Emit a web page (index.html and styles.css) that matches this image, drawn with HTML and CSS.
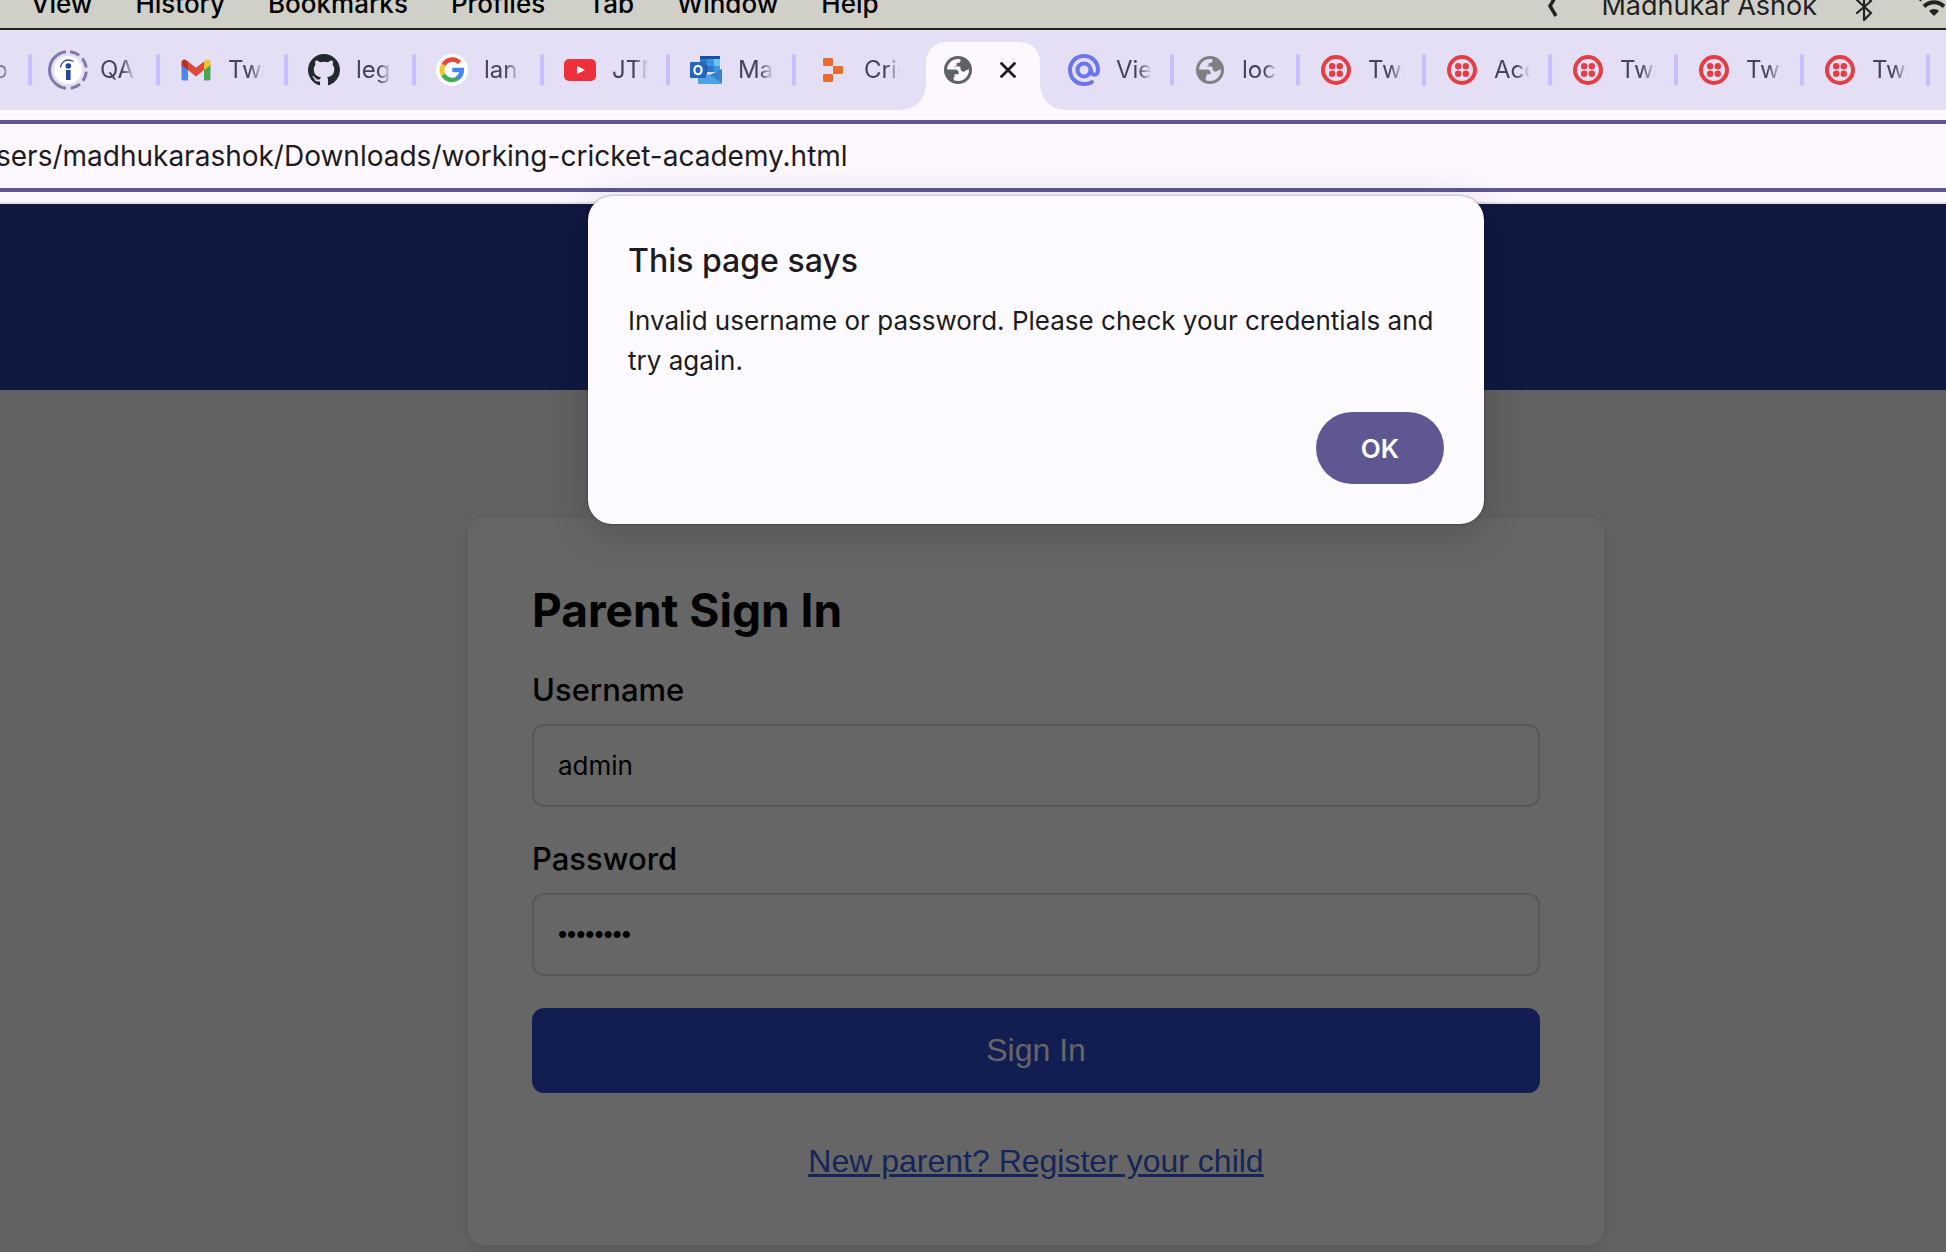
FILE: index.html
```html
<!DOCTYPE html>
<html lang="en">
<head>
<meta charset="utf-8">
<title>Parent Sign In</title>
<link rel="stylesheet" href="styles.css">
</head>
<body>
<svg class="defs" aria-hidden="true">
  <symbol id="globe" viewBox="0 0 32 32">
    <circle cx="16" cy="16" r="14"/>
    <circle class="sea" cx="16" cy="16" r="11"/>
    <path d="M18.500 4v2.500c0 2-1 2.500-3.700 2.500v1.500c0 1.500-.8 2-2.800 2v2.500h5.500c1 0 1.500.6 1.500 1.500 1 1 2 1.500 3.300 1 1.500-.5 2-2 5.200-2A12 12 0 0 0 18.500 4z"/>
    <path class="sea" d="M12 12.500h6.500v3H12z"/>
    <path d="M14.800 9.500h6v4h-2.300c0-1.500-1-2-3.700-2z"/>
    <path d="M4 15.500h9c2.500 0 3.700 1.200 3.700 4v.8h-4.200v2.700h-.8v4.500A12 12 0 0 1 4 15.500z"/>
  </symbol>
  <symbol id="twilio" viewBox="0 0 32 32">
    <circle cx="16" cy="16" r="13" fill="none" stroke="#e33e44" stroke-width="4"/>
    <g fill="#e33e44"><circle cx="12.200" cy="12.300" r="3.200"/><circle cx="19.800" cy="12.300" r="3.200"/><circle cx="12.200" cy="19.700" r="3.200"/><circle cx="19.800" cy="19.700" r="3.200"/></g>
  </symbol>
</svg>

<header class="menubar">
  <nav class="menus">
    <span>View</span><span>History</span><span>Bookmarks</span><span>Profiles</span><span>Tab</span><span>Window</span><span>Help</span>
  </nav>
  <div class="status">
    <svg class="chevron" viewBox="0 0 12 24"><path d="M9 2 3 12l6 10" fill="none" stroke="#222" stroke-width="3.500"/></svg>
    <span>Madhukar Ashok</span>
    <svg class="bluetooth" viewBox="0 0 18 30"><path d="M2 8l14 13-7 7V2l7 7L2 21" fill="none" stroke="#222" stroke-width="2.200" stroke-linejoin="round" stroke-linecap="round"/></svg>
    <svg class="wifi" viewBox="0 0 34 26"><path d="M2 9a22 22 0 0 1 30 0M7 15.500a14 14 0 0 1 20 0" fill="none" stroke="#222" stroke-width="4"/><path d="M12 20a7 7 0 0 1 10 0l-5 5z" fill="#222"/></svg>
  </div>
</header>

<div class="tabstrip">
  <div class="tab cut"><span class="title">o</span></div>
  <div class="tab wide">
    <svg class="icon loading" viewBox="0 0 40 40"><circle cx="20" cy="20" r="14" fill="#fff"/><path d="M18 1.700A18.400 18.400 0 0 0 18 38.300" fill="none" stroke="#8078a8" stroke-width="3"/><path d="M22 1.700A18.400 18.400 0 0 1 38.400 20 18.400 18.400 0 0 1 22 38.300" fill="none" stroke="#8078a8" stroke-width="3" stroke-dasharray="10 4.200"/><circle cx="20.300" cy="16" r="2.800" fill="#2147a0"/><path d="M18 20h4.600v10H18z" fill="#2147a0"/><path d="M12.500 17.500C13.500 11 19 8 25.500 11.500" fill="none" stroke="#2147a0" stroke-width="1.300"/></svg>
    <span class="title">QA T</span></div>
  <div class="tab wide">
    <svg class="icon" viewBox="0 0 32 32"><path d="M1.500 10v14.500c0 1.200.8 2 2 2H8V14z" fill="#4b86ee"/><path d="M30.500 10v14.500c0 1.200-.8 2-2 2H24V14z" fill="#47a654"/><path d="M8 7.500l8 6.200 8-6.200V16l-8 6.500L8 16z" fill="#e0483c"/><path d="M24 7.500l2-1.500c2-1.400 4.500 0 4.500 2.300v3L24 16z" fill="#f5bd32"/><path d="M8 7.500L6 6C4 4.600 1.500 6 1.500 8.300v3L8 16z" fill="#b8302a"/></svg>
    <span class="title">Twilio</span></div>
  <div class="tab wide">
    <svg class="icon" viewBox="0 0 16 16"><path fill="#24292f" d="M8 0C3.580 0 0 3.580 0 8c0 3.540 2.290 6.530 5.470 7.590.4.070.55-.17.55-.38 0-.19-.01-.82-.01-1.490-2.010.37-2.530-.49-2.690-.94-.09-.23-.48-.94-.82-1.130-.28-.15-.68-.52-.01-.53.63-.01 1.080.58 1.230.82.72 1.210 1.870.87 2.330.66.07-.52.28-.87.51-1.070-1.780-.2-3.640-.89-3.640-3.950 0-.87.31-1.590.82-2.150-.08-.2-.36-1.020.08-2.120 0 0 .67-.21 2.200.82.64-.18 1.320-.27 2-.27s1.360.09 2 .27c1.530-1.040 2.200-.82 2.200-.82.44 1.100.16 1.920.08 2.120.51.56.82 1.270.82 2.150 0 3.070-1.870 3.750-3.650 3.950.29.25.54.73.54 1.480 0 1.070-.01 1.930-.01 2.200 0 .21.15.46.55.38A8.010 8.010 0 0 0 16 8c0-4.420-3.580-8-8-8z"/></svg>
    <span class="title">legacy</span></div>
  <div class="tab wide">
    <svg class="icon" viewBox="0 0 32 32"><circle cx="16" cy="16" r="16" fill="#fff"/><g fill="none" stroke-width="4.600"><path d="M23.500 8.600A10 10 0 0 0 7.300 11.200" stroke="#e9473b"/><path d="M7.600 10.600a10 10 0 0 0 0 10.800" stroke="#f7c22c"/><path d="M7.300 20.800a10 10 0 0 0 14.700 3.200" stroke="#43ad54"/><path d="M21.300 24.400A10 10 0 0 0 25.800 16H16.300" stroke="#4285f4"/></g></svg>
    <span class="title">landing</span></div>
  <div class="tab">
    <svg class="icon" viewBox="0 0 32 32"><rect y="5" width="32" height="22" rx="5" fill="#ee303c"/><path d="M13 12l8 4-8 4z" fill="#fff"/></svg>
    <span class="title">JTM</span></div>
  <div class="tab">
    <svg class="icon" viewBox="0 0 32 32"><path d="M10 2h20v5H10z" fill="#1d4f9c"/><path d="M10 5h7v7h-7zM17 12h7v6h-7z" fill="#2b78d0"/><path d="M17 5h7v7h-7z" fill="#3a94df"/><path d="M24 5h6v7h-6z" fill="#62c8f5"/><path d="M24 12h6v6h-6z" fill="#3a94df"/><path d="M10 12h7v8h-7z" fill="#1d4f9c"/><path d="M8 18l12 3 12-6v15H8z" fill="#4ba3e3"/><path d="M32 15v14L20 21z" fill="#3482d0"/><rect y="8" width="16" height="16" rx="1" fill="#2467bd"/><ellipse cx="8" cy="16" rx="3.600" ry="4.200" fill="none" stroke="#fff" stroke-width="2.200"/></svg>
    <span class="title">Mail</span></div>
  <div class="tab">
    <svg class="icon" viewBox="0 0 32 32"><g fill="#ea6c2d"><rect x="7" y="4" width="10" height="8" rx="1"/><rect x="17" y="12" width="10" height="8" rx="1"/><rect x="7" y="20" width="10" height="8" rx="1"/></g></svg>
    <span class="title">Crick</span></div>
  <div class="tab active">
    <svg class="icon dark" viewBox="0 0 32 32"><use href="#globe"/></svg>
    <button class="close" aria-label="Close tab"><svg viewBox="0 0 16 16"><path d="M1.500 1.500l13 13M14.500 1.500l-13 13" stroke="#1d1b20" stroke-width="2.800" stroke-linecap="round"/></svg></button></div>
  <div class="tab plain">
    <svg class="icon" viewBox="0 0 32 32"><g fill="none" stroke="#6b74ec" stroke-width="4"><path d="M24 28c-2 1.500-5 2-8 2C8 30 2 24 2 16S8 2 16 2s14 6 14 14v1c0 5-7 5-7 0v-1" stroke-linecap="round"/><circle cx="16" cy="16" r="6.500"/></g></svg>
    <span class="title">View</span></div>
  <div class="tab"><svg class="icon grey" viewBox="0 0 32 32"><use href="#globe"/></svg><span class="title">local</span></div>
  <div class="tab"><svg class="icon" viewBox="0 0 32 32"><use href="#twilio"/></svg><span class="title">Twilio</span></div>
  <div class="tab"><svg class="icon" viewBox="0 0 32 32"><use href="#twilio"/></svg><span class="title">Acco</span></div>
  <div class="tab"><svg class="icon" viewBox="0 0 32 32"><use href="#twilio"/></svg><span class="title">Twilio</span></div>
  <div class="tab"><svg class="icon" viewBox="0 0 32 32"><use href="#twilio"/></svg><span class="title">Twilio</span></div>
  <div class="tab"><svg class="icon" viewBox="0 0 32 32"><use href="#twilio"/></svg><span class="title">Twilio</span></div>
  <div class="tab"></div>
</div>

<div class="toolbar">
  <input class="address" type="text" aria-label="Address" value="sers/madhukarashok/Downloads/working-cricket-academy.html">
</div>

<div class="viewport">
  <div class="banner"></div>
  <main class="content">
    <form class="card">
      <h1>Parent Sign In</h1>
      <div class="field">
        <label for="username">Username</label>
        <input id="username" type="text" value="admin">
      </div>
      <div class="field">
        <label for="password">Password</label>
        <input id="password" type="password" value="password">
      </div>
      <button class="submit" type="button">Sign In</button>
      <a class="register" href="#">New parent? Register your child</a>
    </form>
  </main>
  <div class="overlay">
    <div class="alert" role="alertdialog" aria-labelledby="alert-title" aria-describedby="alert-text">
      <h2 id="alert-title">This page says</h2>
      <p id="alert-text">Invalid username or password. Please check your credentials and try again.</p>
      <button class="ok" type="button">OK</button>
    </div>
  </div>
</div>
</body>
</html>
```

FILE: styles.css
```css
* { box-sizing: border-box; }

body {
  margin: 0;
  min-height: 100vh;
  display: flex;
  flex-direction: column;
  overflow: hidden;
  background: #626262;
  font-family: Inter, "Liberation Sans", sans-serif;
}

h1, h2, p { margin: 0; }
button, input { font: inherit; border: 0; padding: 0; }
svg { display: block; flex: none; }
.defs { position: absolute; width: 0; height: 0; }

/* System menu bar, scrolled partly out of the top edge */
.menubar {
  display: flex;
  justify-content: space-between;
  align-items: flex-end;
  height: 30px;
  overflow: hidden;
  background: #d0cfc8;
  border-bottom: 2px solid #24231f;
  font-size: 26px;
  line-height: 32px;
  white-space: nowrap;
}
.menus { display: flex; gap: 43px; padding: 0 0 8px 31px; font-weight: 500; }
.status { display: flex; align-items: flex-end; gap: 38px; padding-bottom: 6px; margin-right: -5px; color: #222; font-size: 27px; }
.chevron { width: 12px; height: 24px; margin: 0 4px 4px 0; }
.bluetooth { width: 18px; height: 30px; }
.wifi { width: 34px; height: 26px; margin: 0 0 5px 6px; }

/* Tabs */
.tabstrip {
  display: flex;
  height: 80px;
  overflow: hidden;
  background: #e5dff6;
}
.tab {
  position: relative;
  flex: none;
  display: flex;
  align-items: center;
  gap: 16px;
  width: 126px;
  padding-left: 24px;
}
.tab.wide { width: 128px; }
.tab.cut { width: 28px; padding-left: 0; }
.tab:not(.cut, .active, .plain)::before {
  content: "";
  position: absolute;
  left: 0;
  top: 24px;
  width: 4px;
  height: 32px;
  border-radius: 2px;
  background: #c8bffa;
}
.icon { width: 32px; height: 32px; }
.icon.loading { width: 40px; height: 40px; margin: 0 -4px; }
.icon.dark { fill: #5f6368; --sea: #fdf8ff; }
.icon.grey { fill: #808080; --sea: #e5dff6; }
.sea { fill: var(--sea); }
.title {
  width: 36px;
  overflow: hidden;
  white-space: nowrap;
  font-size: 24px;
  line-height: 32px;
  color: #47435a;
  -webkit-mask-image: linear-gradient(90deg, #000 60%, transparent);
  mask-image: linear-gradient(90deg, #000 60%, transparent);
}
.tab.cut .title { width: 8px; direction: rtl; opacity: .6; }
.tab.active {
  width: 114px;
  margin: 12px 4px 0 8px;
  padding: 0 0 12px 16px;
  gap: 26px;
  border-radius: 20px 20px 0 0;
  background: #fdf8ff;
}
.tab.active::before, .tab.active::after {
  content: "";
  position: absolute;
  bottom: 0;
  width: 24px;
  height: 24px;
}
.tab.active::before { right: 100%; background: radial-gradient(circle at 0 0, transparent 23px, #fdf8ff 24px); }
.tab.active::after { left: 100%; background: radial-gradient(circle at 100% 0, transparent 23px, #fdf8ff 24px); }
.close { width: 16px; height: 16px; background: none; }

/* Address bar */
.toolbar {
  padding: 10px 0;
  background: #fdf8ff;
  border-bottom: 2px solid #e2dfe8;
}
.address {
  display: block;
  width: 100%;
  height: 72px;
  border: solid #5f5791;
  border-width: 4px 0;
  border-radius: 0;
  background: none;
  color: #1d1b20;
  font-size: 28px;
  text-indent: -4px;
}

/* Page under the alert; its left edge lies outside the window */
.viewport {
  position: relative;
  flex: 1;
  background: #626262;
}
.banner { height: 186px; background: #101942; }
.content { padding: 128px 342px 8px 468px; }
.card {
  display: flex;
  flex-direction: column;
  gap: 32px;
  padding: 64px;
  border-radius: 16px;
  background: #666;
  box-shadow: 0 4px 12px rgba(0, 0, 0, .1);
}
h1 { font-size: 46px; line-height: 56px; font-weight: 700; }
.field { display: flex; flex-direction: column; gap: 14px; }
label { font-size: 31px; line-height: 40px; font-weight: 500; }
.field input {
  width: 100%;
  height: 83px;
  padding: 0 24px;
  border: 2px solid #585858;
  border-radius: 12px;
  background: none;
  color: #000;
  font-size: 26px;
}
.field input[type="password"] { font-family: "Liberation Sans", Arial, sans-serif; }
.submit {
  height: 85px;
  border-radius: 12px;
  background: #121e52;
  color: #666;
  font-family: "Liberation Sans", Arial, sans-serif;
  font-size: 32px;
}
.register {
  align-self: center;
  margin-top: 16px;
  color: #162557;
  font-family: "Liberation Sans", Arial, sans-serif;
  font-size: 32px;
  line-height: 40px;
}

/* Alert */
.overlay {
  position: absolute;
  inset: -8px 0 auto 126px;
  display: flex;
  justify-content: center;
}
.alert {
  display: flex;
  flex-direction: column;
  width: 896px;
  padding: 40px;
  border-radius: 24px;
  background: #fdfbff;
  color: #1d1b20;
  box-shadow: 0 0 2px rgba(0, 0, 0, .5), 0 8px 40px rgba(0, 0, 0, .2);
}
h2 { font-size: 32px; line-height: 50px; font-weight: 500; }
.alert p { margin-top: 15px; font-size: 26px; line-height: 40px; }
.ok {
  align-self: flex-end;
  width: 128px;
  height: 72px;
  margin-top: 31px;
  border-radius: 36px;
  background: #5f5791;
  color: #fff;
  font-size: 26px;
  font-weight: 600;
}
```
